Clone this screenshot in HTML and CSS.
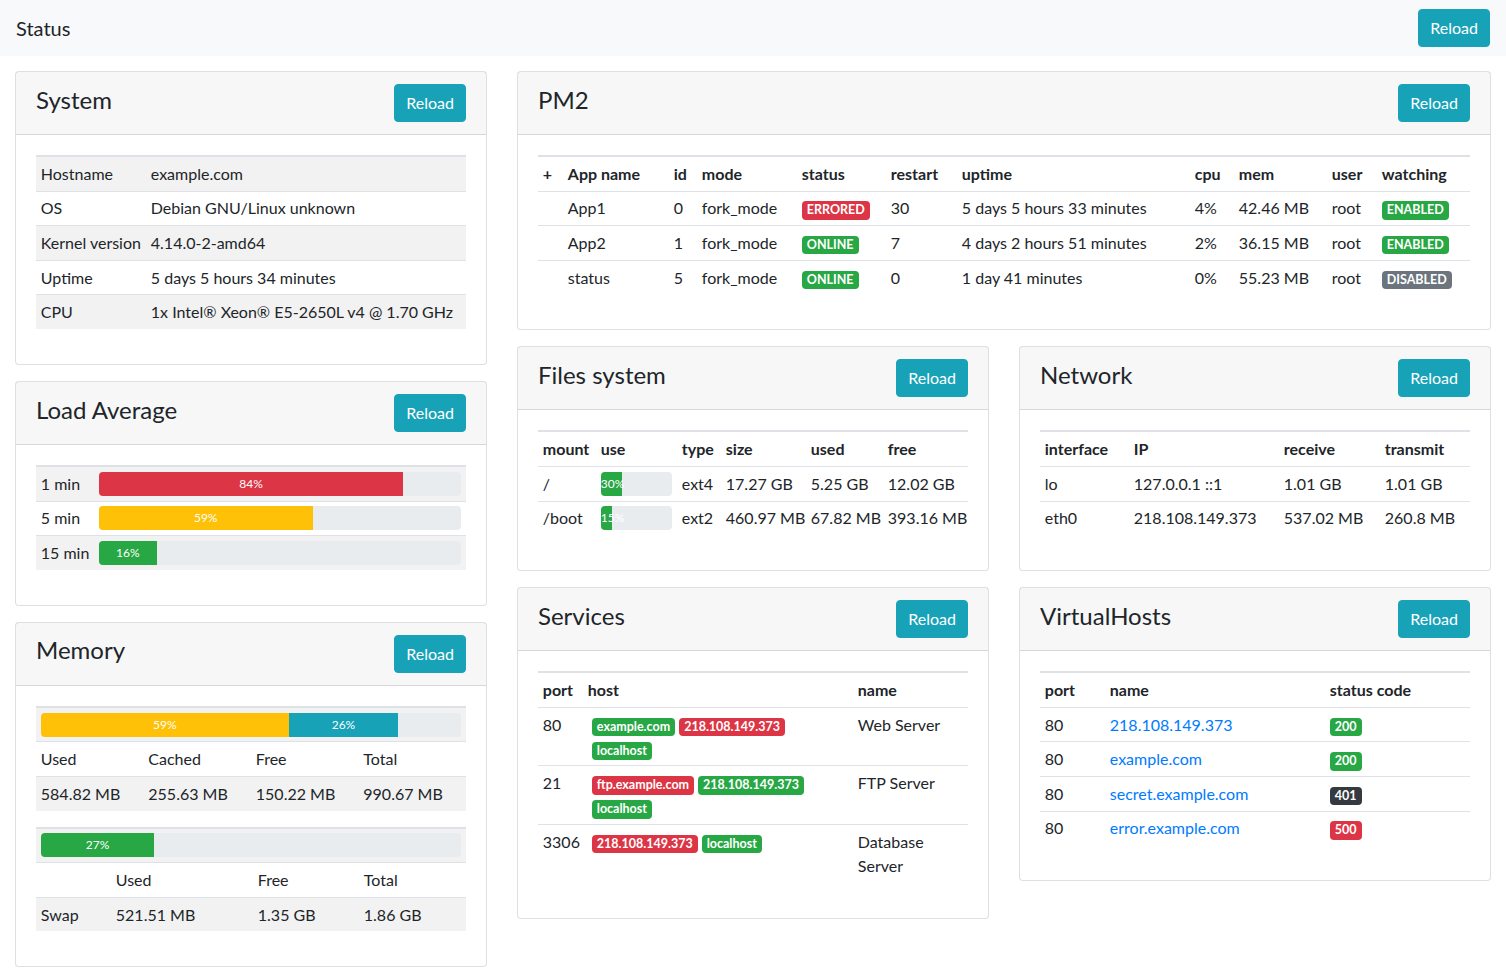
FILE: index.html
```html
<!DOCTYPE html>
<html lang="en">
<head>
<meta charset="utf-8">
<title>Status</title>
<link rel="stylesheet" href="styles.css">
</head>
<body>
<nav class="topbar">
  <span class="brand">Status</span>
  <button class="btn">Reload</button>
</nav>

<div class="layout">
  <div class="col-left">

    <div class="card">
      <div class="card-header"><h4 class="card-title">System</h4><button class="btn">Reload</button></div>
      <div class="card-body">
        <table class="striped t-system">
          <colgroup><col class="c-sys1"><col></colgroup>
          <tbody></tbody>
          <tbody>
            <tr><td>Hostname</td><td>example.com</td></tr>
            <tr><td>OS</td><td>Debian GNU/Linux unknown</td></tr>
            <tr><td>Kernel version</td><td>4.14.0-2-amd64</td></tr>
            <tr><td>Uptime</td><td>5 days 5 hours 34 minutes</td></tr>
            <tr><td>CPU</td><td>1x Intel® Xeon® E5-2650L v4 @ 1.70 GHz</td></tr>
          </tbody>
        </table>
      </div>
    </div>

    <div class="card">
      <div class="card-header"><h4 class="card-title">Load Average</h4><button class="btn">Reload</button></div>
      <div class="card-body">
        <table class="striped">
          <colgroup><col class="c-load1"><col></colgroup>
          <tbody>
            <tr><td>1 min</td><td><div class="progress"><div class="bar bg-danger" style="width:84%">84%</div></div></td></tr>
            <tr><td>5 min</td><td><div class="progress"><div class="bar bg-warning" style="width:59%">59%</div></div></td></tr>
            <tr><td>15 min</td><td><div class="progress"><div class="bar bg-success" style="width:16%">16%</div></div></td></tr>
          </tbody>
        </table>
      </div>
    </div>

    <div class="card">
      <div class="card-header"><h4 class="card-title">Memory</h4><button class="btn">Reload</button></div>
      <div class="card-body">
        <table class="striped">
          <colgroup><col class="c-q"><col class="c-q"><col class="c-q"><col class="c-q"></colgroup>
          <tbody>
            <tr><td colspan="4"><div class="progress"><div class="bar bg-warning" style="width:59%">59%</div><div class="bar bg-info" style="width:26%">26%</div></div></td></tr>
            <tr><td>Used</td><td>Cached</td><td>Free</td><td>Total</td></tr>
            <tr><td>584.82 MB</td><td>255.63 MB</td><td>150.22 MB</td><td>990.67 MB</td></tr>
          </tbody>
        </table>
        <table class="striped">
          <colgroup><col class="c-sw1"><col class="c-sw2"><col class="c-sw3"><col></colgroup>
          <tbody>
            <tr><td colspan="4"><div class="progress"><div class="bar bg-success" style="width:27%">27%</div></div></td></tr>
            <tr><td></td><td>Used</td><td>Free</td><td>Total</td></tr>
            <tr><td>Swap</td><td>521.51 MB</td><td>1.35 GB</td><td>1.86 GB</td></tr>
          </tbody>
        </table>
      </div>
    </div>

  </div>

  <div class="col-right">

    <div class="card">
      <div class="card-header"><h4 class="card-title">PM2</h4><button class="btn">Reload</button></div>
      <div class="card-body">
        <table>
          <colgroup>
            <col class="w25"><col class="w106"><col class="w28"><col class="w100"><col class="w89"><col class="w71"><col class="w233"><col class="w44"><col class="w93"><col class="w50"><col>
          </colgroup>
          <tbody>
            <tr><th>+</th><th>App name</th><th>id</th><th>mode</th><th>status</th><th>restart</th><th>uptime</th><th>cpu</th><th>mem</th><th>user</th><th>watching</th></tr>
            <tr><td></td><td>App1</td><td>0</td><td>fork_mode</td><td><span class="badge bg-danger">ERRORED</span></td><td>30</td><td>5 days 5 hours 33 minutes</td><td>4%</td><td>42.46 MB</td><td>root</td><td><span class="badge bg-success">ENABLED</span></td></tr>
            <tr><td></td><td>App2</td><td>1</td><td>fork_mode</td><td><span class="badge bg-success">ONLINE</span></td><td>7</td><td>4 days 2 hours 51 minutes</td><td>2%</td><td>36.15 MB</td><td>root</td><td><span class="badge bg-success">ENABLED</span></td></tr>
            <tr><td></td><td>status</td><td>5</td><td>fork_mode</td><td><span class="badge bg-success">ONLINE</span></td><td>0</td><td>1 day 41 minutes</td><td>0%</td><td>55.23 MB</td><td>root</td><td><span class="badge bg-secondary">DISABLED</span></td></tr>
          </tbody>
        </table>
      </div>
    </div>

    <div class="grid2">
      <div class="card">
        <div class="card-header"><h4 class="card-title">Files system</h4><button class="btn">Reload</button></div>
        <div class="card-body">
          <table>
            <colgroup><col class="w58"><col class="w81"><col class="w44"><col class="w85"><col class="w77"><col></colgroup>
            <tbody>
              <tr><th>mount</th><th>use</th><th>type</th><th>size</th><th>used</th><th>free</th></tr>
              <tr><td>/</td><td><div class="progress"><div class="bar bg-success" style="width:30%">30%</div></div></td><td>ext4</td><td>17.27 GB</td><td>5.25 GB</td><td>12.02 GB</td></tr>
              <tr><td>/boot</td><td><div class="progress"><div class="bar bg-success" style="width:15%">15%</div></div></td><td>ext2</td><td>460.97 MB</td><td>67.82 MB</td><td>393.16 MB</td></tr>
            </tbody>
          </table>
        </div>
      </div>

      <div class="card">
        <div class="card-header"><h4 class="card-title">Network</h4><button class="btn">Reload</button></div>
        <div class="card-body">
          <table>
            <colgroup><col class="w89"><col class="w150"><col class="w101"><col></colgroup>
            <tbody>
              <tr><th>interface</th><th>IP</th><th>receive</th><th>transmit</th></tr>
              <tr><td>lo</td><td>127.0.0.1 ::1</td><td>1.01 GB</td><td>1.01 GB</td></tr>
              <tr><td>eth0</td><td>218.108.149.373</td><td>537.02 MB</td><td>260.8 MB</td></tr>
            </tbody>
          </table>
        </div>
      </div>

      <div class="card">
        <div class="card-header"><h4 class="card-title">Services</h4><button class="btn">Reload</button></div>
        <div class="card-body">
          <table>
            <colgroup><col class="w45"><col class="w270"><col></colgroup>
            <tbody>
              <tr><th>port</th><th>host</th><th>name</th></tr>
              <tr><td>80</td><td class="wrap"><div class="hosts"><span class="badge bg-success">example.com</span><span class="badge bg-danger">218.108.149.373</span><span class="badge bg-success">localhost</span></div></td><td class="wrap">Web Server</td></tr>
              <tr><td>21</td><td class="wrap"><div class="hosts"><span class="badge bg-danger">ftp.example.com</span><span class="badge bg-success">218.108.149.373</span><span class="badge bg-success">localhost</span></div></td><td class="wrap">FTP Server</td></tr>
              <tr><td>3306</td><td class="wrap"><div class="hosts"><span class="badge bg-danger">218.108.149.373</span><span class="badge bg-success">localhost</span></div></td><td class="wrap">Database Server</td></tr>
            </tbody>
          </table>
        </div>
      </div>

      <div class="card">
        <div class="card-header"><h4 class="card-title">VirtualHosts</h4><button class="btn">Reload</button></div>
        <div class="card-body">
          <table>
            <colgroup><col class="w65"><col class="w220"><col></colgroup>
            <tbody>
              <tr><th>port</th><th>name</th><th>status code</th></tr>
              <tr><td>80</td><td><a href="#">218.108.149.373</a></td><td><span class="badge bg-success">200</span></td></tr>
              <tr><td>80</td><td><a href="#">example.com</a></td><td><span class="badge bg-success">200</span></td></tr>
              <tr><td>80</td><td><a href="#">secret.example.com</a></td><td><span class="badge bg-dark">401</span></td></tr>
              <tr><td>80</td><td><a href="#">error.example.com</a></td><td><span class="badge bg-danger">500</span></td></tr>
            </tbody>
          </table>
        </div>
      </div>
    </div>

  </div>
</div>
</body>
</html>
```
FILE: styles.css
```css
* { box-sizing: border-box; }

body {
  margin: 0;
  font-family: Lato, "Open Sans", sans-serif;
  font-size: 16px;
  line-height: 1.5;
  color: #212529;
  background: #fff;
}

.topbar {
  display: flex;
  justify-content: space-between;
  align-items: center;
  height: 56px;
  padding: 8px 16px;
  background: #f8f9fa;
}

.brand { font-size: 20px; line-height: 30px; }

.btn {
  font-family: inherit;
  font-size: 16px;
  line-height: 24px;
  padding: 6px 11px;
  color: #fff;
  background: #17a2b8;
  border: 1px solid #17a2b8;
  border-radius: 4px;
  cursor: pointer;
}

.layout {
  display: flex;
  gap: 30px;
  padding: 15px 15px 0;
}

.col-left { width: 472px; flex: none; }
.col-right { flex: 1; min-width: 0; }

.grid2 {
  display: grid;
  grid-template-columns: 1fr 1fr;
  column-gap: 30px;
  align-items: start;
}

.card {
  background: #fff;
  border: 1px solid rgba(0, 0, 0, .125);
  border-radius: 4px;
  margin-bottom: 16px;
}

.card-header {
  display: flex;
  justify-content: space-between;
  align-items: center;
  padding: 12px 20px;
  background: rgba(0, 0, 0, .03);
  border-bottom: 1px solid rgba(0, 0, 0, .125);
}

.card-title {
  margin: 0 0 6px;
  font-size: 24px;
  font-weight: 400;
  line-height: 1.2;
}

.card-body { padding: 20px 20px 19px; }

table {
  width: 100%;
  border-collapse: collapse;
  table-layout: fixed;
  margin-bottom: 16px;
}

td, th {
  padding: 4.8px;
  border-top: 1px solid #dee2e6;
  text-align: left;
  vertical-align: top;
  white-space: nowrap;
}

td.wrap { white-space: normal; }

th { font-weight: 700; }

tbody tr:first-child > td,
tbody tr:first-child > th { border-top-width: 2px; }

.striped tbody tr:nth-child(odd) > td { background: #f2f2f2; }

/* column widths */
.c-sys1 { width: 110px; }
.c-load1 { width: 58px; }
.c-q { width: 25%; }
.c-sw1 { width: 75px; }
.c-sw2 { width: 142px; }
.c-sw3 { width: 106px; }
.w25 { width: 25px; }
.w28 { width: 28px; }
.w44 { width: 44px; }
.w45 { width: 45px; }
.w50 { width: 50px; }
.w58 { width: 58px; }
.w65 { width: 65px; }
.w71 { width: 71px; }
.w77 { width: 77px; }
.w81 { width: 81px; }
.w85 { width: 85px; }
.w89 { width: 89px; }
.w93 { width: 93px; }
.w100 { width: 100px; }
.w101 { width: 101px; }
.w106 { width: 106px; }
.w150 { width: 150px; }
.w220 { width: 220px; }
.w233 { width: 233px; }
.w270 { width: 270px; }

/* progress */
.progress {
  display: flex;
  height: 24px;
  overflow: hidden;
  background: #e9ecef;
  border-radius: 4px;
  font-size: 12px;
  line-height: 24px;
}

.bar {
  color: #fff;
  text-align: center;
  white-space: nowrap;
}

/* badges */
.badge {
  display: inline-block;
  padding: 3px 5px;
  font-size: 12.5px;
  font-weight: 700;
  line-height: 1;
  color: #fff;
  border-radius: 4px;
  white-space: nowrap;
  vertical-align: baseline;
}

.hosts { max-width: 240px; }
.hosts .badge { margin-left: 4px; }

.bg-danger { background: #dc3545; }
.bg-warning { background: #ffc107; }
.bg-success { background: #28a745; }
.bg-info { background: #17a2b8; }
.bg-secondary { background: #6c757d; }
.bg-dark { background: #343a40; }

a { color: #007bff; text-decoration: none; }
```
